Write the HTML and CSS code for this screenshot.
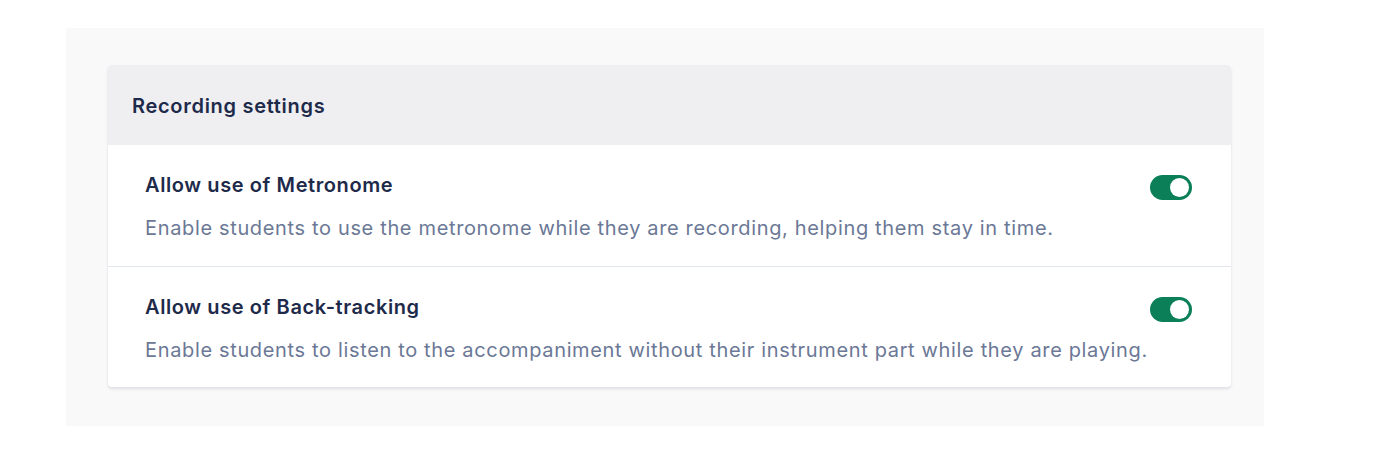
FILE: index.html
```html
<!DOCTYPE html>
<html lang="en">
<head>
  <meta charset="UTF-8" />
  <meta name="viewport" content="width=device-width, initial-scale=1.0"/>
  <title>Recording settings</title>
  <link rel="stylesheet" href="styles.css">
</head>
<body>

  <div class="panel">
    <div class="card">
      <div class="card-header">
        <h2>Recording settings</h2>
      </div>

      <div class="setting">
        <div class="setting-top">
          <h3>Allow use of Metronome</h3>
          <label class="switch">
            <input type="checkbox" checked />
            <span class="track"></span>
          </label>
        </div>
        <p>Enable students to use the metronome while they are recording, helping them stay in time.</p>
      </div>

      <div class="setting">
        <div class="setting-top">
          <h3>Allow use of Back-tracking</h3>
          <label class="switch">
            <input type="checkbox" checked />
            <span class="track"></span>
          </label>
        </div>
        <p>Enable students to listen to the accompaniment without their instrument part while they are playing.</p>
      </div>
    </div>
  </div>

</body>
</html>
```

FILE: styles.css
```css
body {
  margin: 0;
  font-family: 'Inter', 'Noto Sans', sans-serif;
  background: #fff;
  padding: 28px 0 0 66px;
}

.panel {
  width: 1198px;
  height: 398px;
  box-sizing: border-box;
  background: #f9f9f9;
  padding: 37px 33px 0 42px;
}

.card {
  background: #fff;
  border-radius: 4px;
  box-shadow: 0 2px 3px rgba(30, 42, 74, 0.12);
  overflow: hidden;
}

.card-header {
  background: #efeff2;
  height: 80px;
  display: flex;
  align-items: center;
  padding: 0 24px;
}

.card-header h2 {
  margin: 1px 0 0;
  font-size: 20px;
  font-weight: 600;
  letter-spacing: 0.7px;
  color: #1e2a4a;
}

.setting {
  height: 121px;
  box-sizing: border-box;
  padding: 28px 39px 0 37px;
}

.setting + .setting {
  border-top: 1px solid #e2e6ee;
}

.setting-top {
  display: flex;
  justify-content: space-between;
  align-items: flex-start;
}

.setting h3 {
  margin: 0;
  font-size: 20px;
  line-height: 24px;
  font-weight: 600;
  letter-spacing: 0.6px;
  color: #1e2a4a;
}

.setting p {
  margin: 16px 0 0;
  font-size: 20px;
  line-height: 24px;
  letter-spacing: 0.65px;
  color: #6b7896;
}

.switch {
  position: relative;
  width: 42px;
  height: 25px;
  margin-top: 2px;
  display: inline-block;
}

.switch input {
  display: none;
}

.track {
  position: absolute;
  inset: 0;
  background: #0b7f57;
  border-radius: 13px;
}

.track::after {
  content: '';
  position: absolute;
  top: 3px;
  right: 3px;
  width: 19px;
  height: 19px;
  border-radius: 50%;
  background: #fff;
}
```
